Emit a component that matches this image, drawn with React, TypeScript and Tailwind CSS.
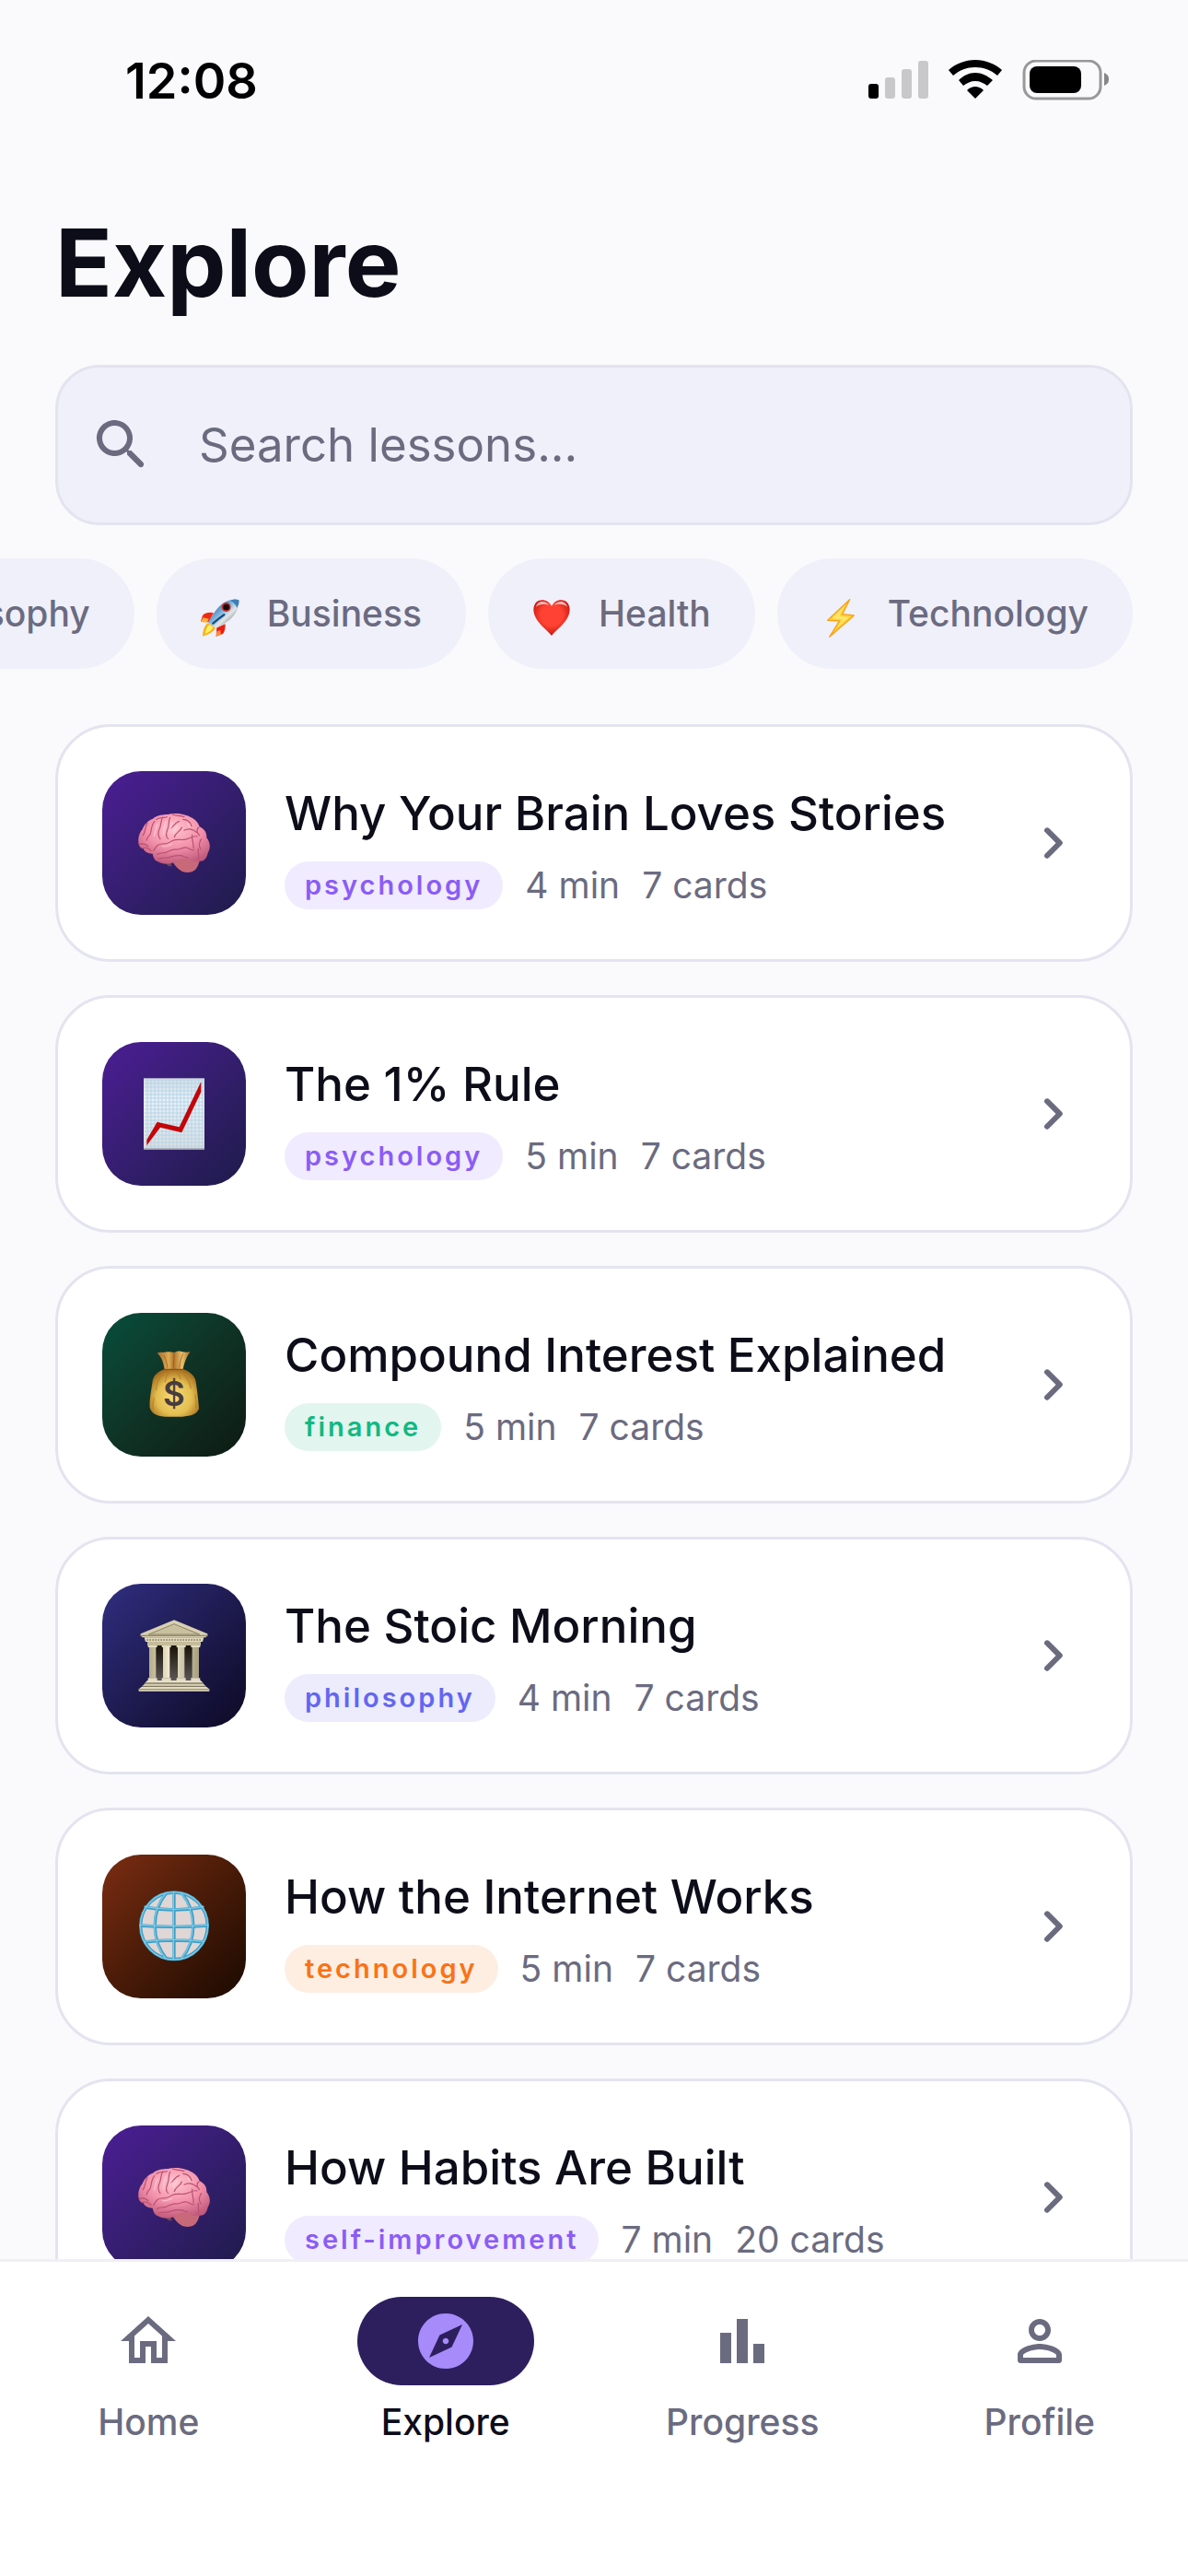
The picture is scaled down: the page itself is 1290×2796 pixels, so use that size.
import * as React from 'react'
import { MdExplore, MdOutlineHome } from 'react-icons/md'

type IconProps = { className?: string }

const BrainIcon = ({ className }: IconProps) => (
  <svg viewBox="0 0 234 234" className={className} aria-hidden="true">
    <defs>
      <radialGradient id="brain" cx="0.5" cy="0.3" r="0.7">
        <stop offset="0" stopColor="#ffc4d0" />
        <stop offset="0.55" stopColor="#f391ab" />
        <stop offset="1" stopColor="#c25b7d" />
      </radialGradient>
    </defs>
    <path d="M92 186c6 8 12 8 18 6l-4-10z" fill="#6b4a4f" />
    <path d="M108 172c8 14 20 30 36 38 16 6 34 4 44-8 6-8 10-18 12-28l-40-14z" fill="#c8697a" />
    <path
      d="M3 124C-3 106 3 84 14 72c6-16 18-28 34-34 14-12 34-14 50-14 16-5 40-4 56 2 22 6 42 20 46 38 18 8 24 22 23 36 12 14 14 34 4 50-4 18-14 28-28 26-14 4-26 0-40-8-14-2-26 2-36 8-16 12-44 12-58 2-12-4-16-16-18-26-14 0-26-6-30-16-8-2-12-6-14-12z"
      fill="url(#brain)"
    />
    <g fill="none" stroke="#b9506f" strokeWidth="3.5" strokeLinecap="round" strokeLinejoin="round">
      <path d="M50 142c8-10 10-22 28-22 12 0 22-2 32-10 16-8 34 0 48-6 12-2 20-12 34-8" />
      <path d="M62 154c10-6 20-4 28-6 14-4 20-12 34-10 12 2 20-8 34-6 10 2 14 10 24 8" />
      <path d="M66 168c14-4 28 0 40-6 12-4 20-4 32-4 10 0 14 8 24 6" />
      <path d="M30 52c-10 16-4 26-14 40M54 46c-12 12-10 30-14 40-4 10-12 10-12 22M80 34c-8 14-4 22-10 36-6 12-6 24 2 34M104 34c-6 12-2 24-8 38-4 10-8 24 2 32M106 70c10-8 14-20 28-24M118 98c4-16 20-18 24-32M146 40c14 0 24 8 28 22M150 76c14-8 30-4 40 6M176 90c-2 18 6 30 4 44M198 66c-10 6-6 20 2 26M206 104c-8 12-10 22-2 34M196 136c-2 14 4 24 0 34M3 122c10-4 22-2 30 6M12 134c12-4 24 0 30 8M60 40c12-8 24-4 34-8M112 24c12 6 26 2 38 8" />
    </g>
    <g fill="none" stroke="#ffd9e0" strokeWidth="4" strokeLinecap="round" opacity="0.6">
      <path d="M62 56c-6 14-6 26-10 38M90 48c-4 14-8 24-8 42M112 52c-4 8-4 14-6 20M128 62c-6 6-10 12-12 22M160 54c6 2 8 8 8 12M80 128c10 0 22-2 30-8" />
    </g>
  </svg>
)

const ChartIcon = ({ className }: IconProps) => (
  <svg viewBox="0 0 234 234" className={className} aria-hidden="true">
    <defs>
      <linearGradient id="paper" x1="0" y1="0" x2="0" y2="1">
        <stop offset="0" stopColor="#d5dde0" />
        <stop offset="0.3" stopColor="#eaf2f7" />
        <stop offset="1" stopColor="#dcdedd" />
      </linearGradient>
      <pattern id="grid" width="12" height="12" patternUnits="userSpaceOnUse">
        <path d="M0 6h12M6 0v12" stroke="#b5d4ea" strokeWidth="3" />
      </pattern>
    </defs>
    <rect x="18" y="1" width="198" height="232" fill="url(#paper)" />
    <rect x="21" y="4" width="192" height="226" fill="url(#grid)" />
    <path d="M18 231h198" stroke="#9c9ca4" strokeWidth="4" />
    <path d="M28 202 62 143 74 146 134 160 205 12v34L142 178 72 161 28 220z" fill="#c30508" />
  </svg>
)

const MoneyBagIcon = ({ className }: IconProps) => (
  <svg viewBox="0 0 234 234" className={className} aria-hidden="true">
    <defs>
      <radialGradient id="bag" cx="0.5" cy="0.6" r="0.6">
        <stop offset="0" stopColor="#f8dc78" />
        <stop offset="0.6" stopColor="#e3bd50" />
        <stop offset="1" stopColor="#a56c1d" />
      </radialGradient>
      <linearGradient id="neck" x1="0" x2="1">
        <stop offset="0" stopColor="#a8692a" />
        <stop offset="0.35" stopColor="#dfac52" />
        <stop offset="0.5" stopColor="#b0742b" />
        <stop offset="0.75" stopColor="#e8c06b" />
        <stop offset="1" stopColor="#a86b2b" />
      </linearGradient>
    </defs>
    <path d="M62 14c8-4 14-2 20-2 10-4 26-2 36 0 8-6 20-6 26-2 8 2 18 2 26 0-10 12-18 28-24 58H86C82 40 74 24 62 14z" fill="url(#neck)" />
    <path d="M88 66c-24 8-40 20-42 46-4 30-10 54-8 80 6 20 26 28 52 29h54c28-2 48-8 54-26-2-30-6-62-10-88-4-22-22-34-42-41z" fill="url(#bag)" />
    <path d="M86 67h60" stroke="#8a5119" strokeWidth="4" strokeLinecap="round" />
    <path d="M82 80c-16 14-22 34-24 54M100 76c-8 12-10 20-12 32M144 78c16 14 24 30 28 50M128 76c4 8 8 14 10 22M52 160c-4 16-6 26-4 36M186 150c2 14 4 30 2 42" fill="none" stroke="#b07d26" strokeWidth="4" strokeLinecap="round" opacity="0.7" />
    <path d="M84 20c6 14 10 28 12 42M118 14c-2 18-2 32-4 48M146 16c-6 14-10 30-12 46" fill="none" stroke="#8f5721" strokeWidth="3" opacity="0.7" />
    <text x="117" y="187" textAnchor="middle" fill="#473d3e" className="font-['Inter',sans-serif] text-[110px] font-semibold">
      $
    </text>
  </svg>
)

const TempleIcon = ({ className }: IconProps) => (
  <svg viewBox="0 0 234 234" className={className} aria-hidden="true">
    <defs>
      <linearGradient id="column" x1="0" x2="1">
        <stop offset="0" stopColor="#b5ab8a" />
        <stop offset="0.4" stopColor="#f0e9d0" />
        <stop offset="1" stopColor="#a89f80" />
      </linearGradient>
      <linearGradient id="shade" x1="0" y1="0" x2="0" y2="1">
        <stop offset="0" stopColor="#161005" />
        <stop offset="1" stopColor="#5c5657" />
      </linearGradient>
    </defs>
    <path d="M40 80h154v118H40z" fill="url(#shade)" />
    <path d="M117 1 8 46v6l6 6h206l6-6v-6z" fill="#d9d0b1" />
    <path d="M117 14 34 48h166z" fill="#c9c09f" stroke="#8d8466" strokeWidth="3" />
    <path d="M8 52h218" stroke="#8d8466" strokeWidth="4" />
    <path d="M20 58h194l-4 14H24z" fill="#e0d8bb" />
    <path d="M28 66h180" stroke="#867d60" strokeWidth="5" strokeDasharray="5 4" />
    <path d="M30 72h174v12H30z" fill="#c5bc9b" />
    <path d="M36 84h22v106H36zM81 84h22v106H81zM129 84h22v106h-22zM176 84h22v106h-22z" fill="url(#column)" />
    <path d="M32 84h30v6H32zM77 84h30v6H77zM125 84h30v6h-30zM172 84h30v6h-30zM32 190h30v8H32zM77 190h30v8H77zM125 190h30v8h-30zM172 190h30v8h-30z" fill="#e4dcc1" />
    <path d="M30 198h174l8 8H22z" fill="#e8e1c8" />
    <path d="M22 208h190l8 8H14z" fill="#d8cfae" />
    <path d="M12 218h210l10 8v7H2v-7z" fill="#e4dcbf" />
    <path d="M22 207h190M13 217h208M2 227h230" stroke="#8d8466" strokeWidth="3" />
  </svg>
)

const GlobeIcon = ({ className }: IconProps) => (
  <svg viewBox="0 0 234 234" className={className} aria-hidden="true">
    <circle cx="117" cy="115" r="112" fill="#e0d6d6" />
    <g fill="none" stroke="#3f9fc6" strokeWidth="10">
      <circle cx="117" cy="115" r="109" />
      <path d="M117 4v222M5 114q112 8 224 0M20 54q97 18 194 0M18 168q99-12 198 0" />
      <path d="M92 8C42 70 42 160 92 222M142 8c50 62 50 152 0 214" />
    </g>
    <g fill="none" stroke="#7dcbe8" strokeWidth="4">
      <circle cx="117" cy="115" r="110" />
      <path d="M115 4v222M5 112q112 8 224 0M20 52q97 18 194 0M18 166q99-12 198 0" />
      <path d="M90 8C40 70 40 160 90 222M140 8c50 62 50 152 0 214" />
    </g>
  </svg>
)

const RocketIcon = ({ className }: IconProps) => (
  <svg viewBox="0 0 126 126" className={className} aria-hidden="true">
    <defs>
      <linearGradient id="hull" x1="0" y1="0" x2="1" y2="1">
        <stop offset="0.2" stopColor="#2f70ab" />
        <stop offset="0.45" stopColor="#86b8de" />
        <stop offset="0.6" stopColor="#e3e6e6" />
        <stop offset="0.85" stopColor="#67737c" />
      </linearGradient>
    </defs>
    <path d="M42 46C28 42 14 46 6 54L0 74l26 2z" fill="#f02a12" />
    <path d="M0 75l8-14 18 4-6 12z" fill="#ffb13b" />
    <path d="M80 82c0 14-2 26-8 32l-22 8 2-28z" fill="#ee1b10" />
    <path d="M50 122l2-16 12-4 2 14z" fill="#ff8a3c" />
    <path d="M24 78c-12 8-18 26-18 44 20-6 36-14 42-28z" fill="#f6b21c" />
    <path d="M28 84c-8 6-12 18-14 30 14-6 22-12 26-22z" fill="#ffee62" />
    <path d="M124 4C96-4 66 12 46 42L24 76l24 20c40-18 80-48 76-92z" fill="url(#hull)" />
    <path d="M124 4c-10-4-20-2-28 2 10 4 18 12 22 24 4-8 8-16 6-26z" fill="#3d7fb5" />
    <circle cx="83" cy="27" r="15" fill="#c92a24" />
    <circle cx="83" cy="27" r="10" fill="#160c10" />
    <path d="M40 80c14-12 24-20 36-28" stroke="#174f84" strokeWidth="7" strokeLinecap="round" />
  </svg>
)

const HeartIcon = ({ className }: IconProps) => (
  <svg viewBox="0 0 126 126" className={className} aria-hidden="true">
    <defs>
      <radialGradient id="heart" cx="0.5" cy="0.42" r="0.6">
        <stop offset="0.5" stopColor="#ff4233" />
        <stop offset="1" stopColor="#c3140c" />
      </radialGradient>
    </defs>
    <path d="M63 120C44 96 6 74 4 36 4 16 16 4 32 4c14 0 25 8 31 20C69 12 80 4 94 4c16 0 28 12 28 32-2 38-40 60-59 84z" fill="url(#heart)" />
    <path d="M12 26C16 14 24 9 33 9c9 0 16 4 21 11-12-4-30-4-42 6zM72 20C77 13 85 9 93 9c9 0 17 5 21 17-12-10-30-10-42-6z" fill="#fff" opacity="0.65" />
  </svg>
)

const BoltIcon = ({ className }: IconProps) => (
  <svg viewBox="0 0 126 126" className={className} aria-hidden="true">
    <path d="M92 2 20 70l38 2-32 52 80-70-38-4z" fill="#ffd02e" stroke="#f9a11b" strokeWidth="4" strokeLinejoin="round" />
    <path d="M80 18 34 64l34 3-18 28 40-36-32-3z" fill="#ffe66b" />
  </svg>
)

const ChevronIcon = ({ className }: IconProps) => (
  <svg viewBox="0 0 24 24" className={className} fill="currentColor" aria-hidden="true">
    <path d="M9.29 6.71a.996.996 0 0 0 0 1.41L13.17 12l-3.88 3.88a.996.996 0 1 0 1.41 1.41l4.59-4.59a.996.996 0 0 0 0-1.41L10.7 6.7c-.38-.38-1.02-.38-1.41.01z" />
  </svg>
)

const SearchIcon = ({ className }: IconProps) => (
  <svg viewBox="0 0 24 24" className={className} fill="currentColor" aria-hidden="true">
    <path d="M15.5 14h-.79l-.28-.27c1.2-1.4 1.82-3.31 1.48-5.34-.47-2.78-2.79-5-5.59-5.34-4.23-.52-7.79 3.04-7.27 7.27.34 2.8 2.56 5.12 5.34 5.59 2.03.34 3.94-.28 5.34-1.48l.27.28v.79l4.25 4.25c.41.41 1.08.41 1.49 0 .41-.41.41-1.08 0-1.49L15.5 14zm-6 0C7.01 14 5 11.99 5 9.5S7.01 5 9.5 5 14 7.01 14 9.5 11.99 14 9.5 14z" />
  </svg>
)

const BarsIcon = ({ className }: IconProps) => (
  <svg viewBox="0 0 24 24" className={className} fill="currentColor" aria-hidden="true">
    <path d="M4 9h4v11H4zm6-5h4v16h-4zm6 9h4v7h-4z" />
  </svg>
)

const PersonIcon = ({ className }: IconProps) => (
  <svg viewBox="0 0 24 24" className={className} fill="currentColor" aria-hidden="true">
    <path d="M12 6c1.1 0 2 .9 2 2s-.9 2-2 2-2-.9-2-2 .9-2 2-2m0 9c2.7 0 5.8 1.29 6 2v1H6v-.99c.2-.72 3.3-2.01 6-2.01m0-11C9.79 4 8 5.79 8 8s1.79 4 4 4 4-1.79 4-4-1.79-4-4-4zm0 9c-2.67 0-8 1.34-8 4v2c0 .55.45 1 1 1h14c.55 0 1-.45 1-1v-2c0-2.66-5.33-4-8-4z" />
  </svg>
)

const StatusIcons = () => (
  <svg viewBox="0 0 262 44" className="h-[44px] w-[262px]" aria-hidden="true">
    <rect x="0" y="26" width="11" height="16" rx="3" />
    <g fill="#c8c8c9">
      <rect x="18" y="19" width="11" height="23" rx="3" />
      <rect x="36" y="10" width="11" height="32" rx="3" />
      <rect x="54" y="1" width="11" height="41" rx="3" />
    </g>
    <path d="M116 0c11 0 21 4 29 11l-5 6c-7-6-15-9-24-9s-17 3-24 9l-5-6C95 4 105 0 116 0z" />
    <path d="M116 14c7 0 13 3 19 8l-6 6c-4-3-8-5-13-5s-9 2-13 5l-5-6c5-5 11-8 18-8z" />
    <path d="M116 29c3 0 6 1 9 4l-9 9-9-9c3-3 6-4 9-4z" />
    <rect x="169" y="1" width="83" height="41" rx="13" fill="none" stroke="#98989a" strokeWidth="3" />
    <rect x="175" y="7" width="56" height="29" rx="8" />
    <path d="M256 14c4 2 5 4 5 7s-1 5-5 7z" fill="#868688" />
  </svg>
)

const categories = [
  { name: 'Philosophy', icon: TempleIcon },
  { name: 'Business', icon: RocketIcon },
  { name: 'Health', icon: HeartIcon },
  { name: 'Technology', icon: BoltIcon },
]

const purple = { tile: 'from-[#4c1d95] to-[#1e1b4b]', tag: 'bg-[#f0ebfe] text-[#8b5cf6]' }
const green = { tile: 'from-[#064e3b] to-[#0d1a12]', tag: 'bg-[#e2f5ee] text-[#10b981]' }
const indigo = { tile: 'from-[#312e81] to-[#0d0a26]', tag: 'bg-[#ececfd] text-[#6366f1]' }
const orange = { tile: 'from-[#7c2d12] to-[#1c0a02]', tag: 'bg-[#feeee2] text-[#f97316]' }

const lessons = [
  { title: 'Why Your Brain Loves Stories', tag: 'psychology', minutes: 4, cards: 7, icon: BrainIcon, theme: purple },
  { title: 'The 1% Rule', tag: 'psychology', minutes: 5, cards: 7, icon: ChartIcon, theme: purple },
  { title: 'Compound Interest Explained', tag: 'finance', minutes: 5, cards: 7, icon: MoneyBagIcon, theme: green },
  { title: 'The Stoic Morning', tag: 'philosophy', minutes: 4, cards: 7, icon: TempleIcon, theme: indigo },
  { title: 'How the Internet Works', tag: 'technology', minutes: 5, cards: 7, icon: GlobeIcon, theme: orange },
  { title: 'How Habits Are Built', tag: 'self-improvement', minutes: 7, cards: 20, icon: BrainIcon, theme: purple },
]

const tabs = [
  { name: 'Home', icon: MdOutlineHome },
  { name: 'Explore', icon: MdExplore },
  { name: 'Progress', icon: BarsIcon },
  { name: 'Profile', icon: PersonIcon },
]

export default function App() {
  const [query, setQuery] = React.useState('')
  const [activeTab, setActiveTab] = React.useState('Explore')

  return (
    <div className="flex h-screen flex-col overflow-hidden bg-[#fafafd] font-['Inter',sans-serif] text-[#0d0d1a]">
      <div className="flex h-[177px] shrink-0 items-start justify-between pt-[56px] pr-[85px] pl-[136px] text-black">
        <span className="text-[54px] leading-[64px] font-semibold">12:08</span>
        <div className="pt-[9px]">
          <StatusIcons />
        </div>
      </div>

      <main className="flex min-h-0 flex-1 flex-col overflow-hidden px-[60px] pt-12">
        <h1 className="shrink-0 text-[102px] leading-[120px] font-bold">Explore</h1>

        <label className="mt-[51px] flex h-[174px] shrink-0 items-center gap-[48px] rounded-[48px] border-3 border-[#e4e4f0] bg-[#f0f0fa] px-[33px] text-[#6b6b80]">
          <SearchIcon className="size-[72px] shrink-0" />
          <input
            type="text"
            aria-label="Search lessons"
            value={query}
            onChange={(e) => setQuery(e.target.value)}
            placeholder="Search lessons..."
            className="min-w-0 flex-1 bg-transparent text-[51px] outline-none placeholder:text-[#6b6b80]"
          />
        </label>

        {/* category row, scrolled to its end */}
        <div className="-mx-[60px] mt-9 flex shrink-0 justify-end gap-6 overflow-hidden px-[60px]">
          {categories.map(({ name, icon: Icon }) => (
            <button
              key={name}
              type="button"
              className="flex h-[120px] shrink-0 items-center gap-[30px] rounded-full bg-[#f0f0fa] px-12 text-[39px] font-medium text-[#6b6b80]"
            >
              <span className="flex h-[52px] items-end">
                <Icon className="size-[42px]" />
              </span>
              {name}
            </button>
          ))}
        </div>

        <ul className="mt-[60px] flex flex-col gap-9">
          {lessons.map(({ title, tag, minutes, cards, icon: Icon, theme }) => (
            <li key={title} className="shrink-0">
              <button
                type="button"
                className="flex w-full items-center rounded-[60px] border-3 border-[#e4e4f0] bg-white p-12 text-left"
              >
                <span className={`flex size-[156px] shrink-0 items-center justify-center rounded-[42px] bg-linear-to-br ${theme.tile}`}>
                  <Icon className="size-[78px]" />
                </span>
                <span className="ml-[42px] flex min-w-0 flex-1 flex-col gap-3 pt-0.5">
                  <span className="text-[51px] leading-[78px] font-medium">{title}</span>
                  <span className="flex items-center gap-6 text-[39px] leading-[54px] text-[#6b6b80]">
                    <span className={`rounded-full px-[22px] text-[29px] leading-[52px] font-semibold tracking-[3px] ${theme.tag}`}>
                      {tag}
                    </span>
                    <span>{minutes} min</span>
                    <span>{cards} cards</span>
                  </span>
                </span>
                <ChevronIcon className="size-[72px] shrink-0 text-[#6b6b80]" />
              </button>
            </li>
          ))}
        </ul>
      </main>

      <nav className="grid shrink-0 grid-cols-4 border-t-3 border-[#f0f0f4] bg-white pt-[38px] pb-[143px]">
        {tabs.map(({ name, icon: Icon }) => {
          const active = name === activeTab
          return (
            <button
              key={name}
              type="button"
              onClick={() => setActiveTab(name)}
              className={`flex flex-col items-center gap-4 text-[39px] leading-[48px] font-medium ${active ? 'text-[#0d0d1a]' : 'text-[#6b6b80]'}`}
            >
              <span className={`flex h-24 w-48 items-center justify-center rounded-full ${active ? 'bg-[#2d1f5e] text-[#a78bfa]' : ''}`}>
                <Icon className="size-[72px]" />
              </span>
              {name}
            </button>
          )
        })}
      </nav>
    </div>
  )
}
